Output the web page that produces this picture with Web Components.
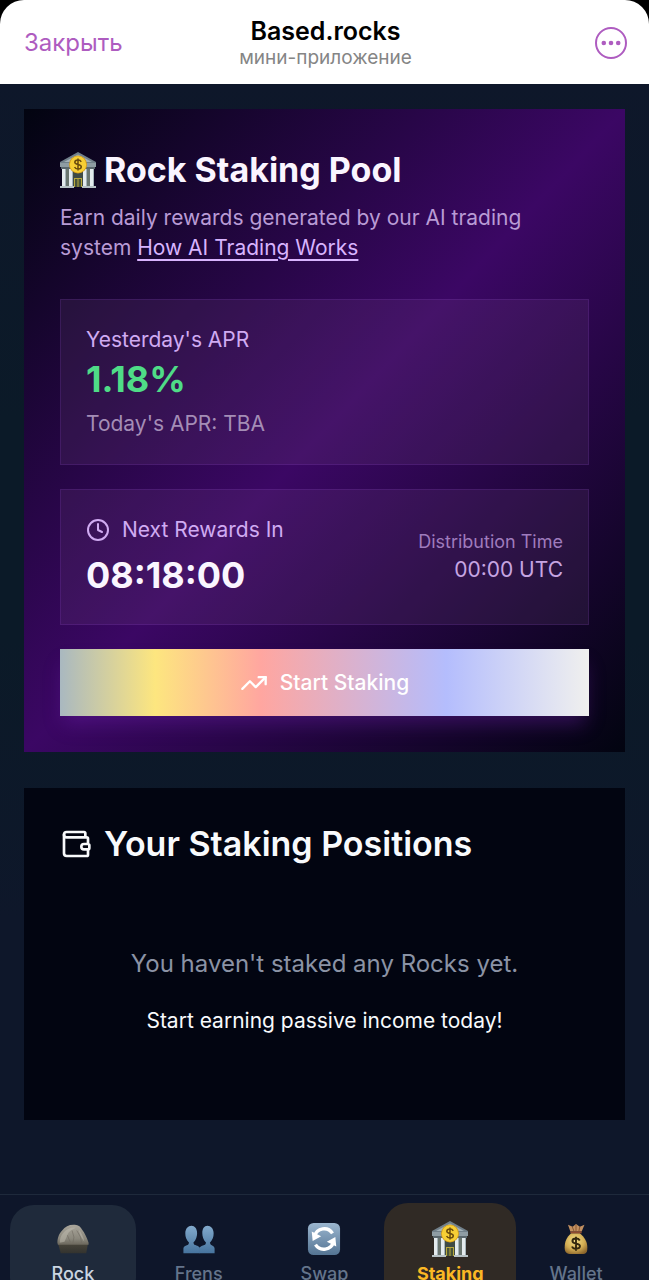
<!DOCTYPE html>
<html lang="ru">
<head>
<meta charset="UTF-8">
<meta name="viewport" content="width=device-width, initial-scale=1.0">
<title>Based.rocks</title>
<style>
    body{
        margin:0;
        background:#000;
        font-family:Inter, "Noto Sans", sans-serif;
        overflow:hidden;
    }
</style>
</head>
<body>
<rocks-app></rocks-app>
<script>
const icons = {
    more: `<svg viewBox="0 0 32 32" fill="none" stroke="currentColor" stroke-width="2">
        <circle cx="16" cy="16" r="15"/>
        <g fill="currentColor" stroke="none"><circle cx="8.8" cy="16" r="2.3"/><circle cx="16" cy="16" r="2.3"/><circle cx="23.2" cy="16" r="2.3"/></g>
    </svg>`,
    clock: `<svg viewBox="0 0 24 24" fill="none" stroke="currentColor" stroke-width="2" stroke-linecap="round" stroke-linejoin="round">
        <circle cx="12" cy="12" r="10"/><path d="M12 6v6l4 2"/>
    </svg>`,
    trend: `<svg viewBox="0 0 24 24" fill="none" stroke="currentColor" stroke-width="2" stroke-linecap="round" stroke-linejoin="round">
        <path d="M22 7 13.5 15.5 8.5 10.5 2 17"/><path d="M16 7h6v6"/>
    </svg>`,
    purse: `<svg viewBox="0 0 24 24" fill="none" stroke="currentColor" stroke-width="2" stroke-linecap="round" stroke-linejoin="round">
        <path d="M19 7V4a1 1 0 0 0-1-1H5a2 2 0 0 0 0 4h15a1 1 0 0 1 1 1v4h-3a2 2 0 0 0 0 4h3a1 1 0 0 0 1-1v-2a1 1 0 0 0-1-1"/>
        <path d="M3 5v14a2 2 0 0 0 2 2h15a1 1 0 0 0 1-1v-4"/>
    </svg>`,
    bank: `<svg viewBox="0 0 36 36">
        <path d="M3 14h30v20H3z" fill="#69756f"/>
        <path d="M12 18h12v16H12z" fill="#3f4b45"/>
        <path d="M18 0 36 10v2H0v-2z" fill="#71808a"/>
        <path d="M18 2.5 32 10H4z" fill="#a3b1b8"/>
        <path d="M0 11h36v4H0z" fill="#8e9ca3"/>
        <path d="M1 15h34v2H1z" fill="#5a676d"/>
        <g fill="#e4ebee"><path d="M2 17h4v17H2zM9 17h4v17H9zM23 17h4v17h-4zM30 17h4v17h-4z"/></g>
        <g fill="#a5b3b9"><path d="M5 17h1v17H5zM12 17h1v17h-1zM26 17h1v17h-1zM33 17h1v17h-1z"/></g>
        <path d="M14 26h8v9h-8z" fill="#b9a83c"/>
        <path d="M15 27h2.500v8H15zM18.500 27H21v8h-2.500z" fill="#485338"/>
        <path d="M0 34h14v2H0zM22 34h14v2H22z" fill="#b7c2c6"/>
        <circle cx="18" cy="12.500" r="9" fill="#d59b16"/>
        <circle cx="18" cy="12.500" r="8.200" fill="#f7cf35"/>
        <path d="M21.200 9.800c-.6-1.200-1.700-1.800-3.200-1.800-1.900 0-3.200.9-3.200 2.300 0 3.200 6.500 1.300 6.500 4.500 0 1.400-1.300 2.300-3.300 2.300-1.700 0-2.900-.7-3.400-2M18 6.500v12" fill="none" stroke="#6b4c0d" stroke-width="1.500"/>
    </svg>`,
    rock: `<svg viewBox="0 0 36 36">
        <defs>
            <linearGradient id="r" x1="0" y1="0" x2="0" y2="1"><stop offset="0" stop-color="#aaa69b"/><stop offset=".7" stop-color="#8a877c"/><stop offset="1" stop-color="#6b675c"/></linearGradient>
            <linearGradient id="w" x1="0" y1="0" x2="0" y2="1"><stop offset="0" stop-color="#4a463b"/><stop offset="1" stop-color="#33332f"/></linearGradient>
        </defs>
        <path d="M2 22h32l-2 11H5z" fill="url(#w)"/>
        <path d="M1.500 22c0-4 1-9 5-13 3-4 7-6 12-6 4 0 7 1 9 5 3 4 5 8 7 14v2H2z" fill="url(#r)"/>
        <path d="M8 11c4-4 9-6 13-5-4 2-8 4-9 8l-3 7-5 1c0-4 1-8 4-11zM24 8c3 3 5 8 6 13l-4-6z" fill="#c2beb1" opacity=".5"/>
        <path d="m17 9 2 7-1 6M22 9l4 7 1 6M12 14l3 7" fill="none" stroke="#6d695f" opacity=".6"/>
    </svg>`,
    frens: `<svg viewBox="0 0 36 36">
        <defs><linearGradient id="f" x1="0" y1="0" x2="0" y2="1"><stop offset="0" stop-color="#82aacd"/><stop offset="1" stop-color="#47749e"/></linearGradient></defs>
        <g fill="url(#f)">
            <path d="M18.500 33V28c0-2 3-3 6-4l1-2c-3-3-4-7-4-10 0-5 2-8 5.500-8s6.500 3 6.500 8c0 4-1 7-4 10l1 2c2 1 4 2 4 4v5z"/>
            <path d="M1.500 33v-5c0-2 2-3 5-4l1-2c-3-3-4-6-4-10 0-5 3-8 6.500-8s6 3 6 8c0 3-1 7-4 10l1 2c3 1 6 2 6 4v5z"/>
        </g>
    </svg>`,
    swap: `<svg viewBox="0 0 36 36">
        <defs><linearGradient id="s" x1="0" y1="0" x2="0" y2="1"><stop offset="0" stop-color="#9bb6cf"/><stop offset="1" stop-color="#547493"/></linearGradient></defs>
        <rect x="1" y="1" width="34" height="34" rx="6" fill="url(#s)"/>
        <path d="M8 15a10.500 10.500 0 0 1 19-3M28 21a10.500 10.500 0 0 1-19 3" fill="none" stroke="#fff" stroke-width="3.600"/>
        <path d="m5 10 1 10 9-5zM31 26l-1-10-9 5z" fill="#fff"/>
    </svg>`,
    bag: `<svg viewBox="0 0 36 36">
        <defs><radialGradient id="b" cx=".45" cy=".35" r=".7"><stop offset="0" stop-color="#f2dc85"/><stop offset=".6" stop-color="#d3ad53"/><stop offset="1" stop-color="#8e672c"/></radialGradient></defs>
        <path d="M12 10 9.500 3l5 2L18 2l4 3 5-2-3 7z" fill="#c29061"/>
        <path d="m14 5 2 5M18 3v7M22 5l-1 5" stroke="#86562f" fill="none"/>
        <path d="M13 12C8 16 6 21 6 27c0 5 2 7 7 7h11c5 0 6-2 6-7 0-6-3-11-8-15z" fill="url(#b)"/>
        <path d="M12 10h12v2H12z" fill="#8f4a30"/>
        <path d="M22 19.500c-.8-1.400-2.200-2-4-2-2.200 0-3.800 1-3.800 2.700 0 3.800 8 1.500 8 5.300 0 1.700-1.700 2.800-4.200 2.800-2.100 0-3.600-.8-4.200-2.400M18 15.500v15" fill="none" stroke="#33270f" stroke-width="2"/>
    </svg>`
};

class rockIcon extends HTMLElement{
    constructor(){
        super();
        this.attachShadow({mode:'open'});
    }
    connectedCallback(){
        this.shadowRoot.innerHTML = `
            <style>
                :host{
                    display:block;
                    flex:none;
                    width:28px;
                    height:28px;
                }
                svg{
                    display:block;
                    width:100%;
                    height:100%;
                }
            </style>
            ${icons[this.getAttribute('name')]}
        `
    }
}
customElements.define('rock-icon', rockIcon)

class appHeader extends HTMLElement{
    constructor(){
        super();
        this.attachShadow({mode:'open'});
    }
    connectedCallback(){
        this.shadowRoot.innerHTML = `
            <style>
                :host{
                    display:block;
                    background:#000;
                }
                header{
                    display:grid;
                    grid-template-columns:1fr auto 1fr;
                    align-items:center;
                    box-sizing:border-box;
                    min-height:84px;
                    padding:2px 22px 0 24px;
                    background:#fff;
                    border-radius:24px 24px 0 0;
                }
                button{
                    padding:0;
                    border:0;
                    background:none;
                    color:#ae5cc0;
                    font:400 24px/32px Inter, "Noto Sans", sans-serif;
                    cursor:pointer;
                }
                .close{
                    justify-self:start;
                }
                .more{
                    justify-self:end;
                }
                rock-icon{
                    width:32px;
                    height:32px;
                }
                .heading{
                    padding-top:2px;
                    text-align:center;
                }
                h1{
                    margin:0;
                    color:#000;
                    font-size:25px;
                    font-weight:600;
                    line-height:28px;
                }
                p{
                    margin:0;
                    color:#858585;
                    font-size:19px;
                    line-height:26px;
                }
            </style>
            <header>
                <button class="close" type="button">Закрыть</button>
                <div class="heading">
                    <h1>Based.rocks</h1>
                    <p>мини-приложение</p>
                </div>
                <button class="more" type="button" aria-label="Ещё"><rock-icon name="more"></rock-icon></button>
            </header>
        `
    }
}
customElements.define('app-header', appHeader)

// translucent box inside the pool card
class statPanel extends HTMLElement{
    constructor(){
        super();
        this.attachShadow({mode:'open'});
    }
    connectedCallback(){
        this.shadowRoot.innerHTML = `
            <style>
                :host{
                    display:flex;
                    align-items:center;
                    justify-content:space-between;
                    padding:25px;
                    border:1px solid rgba(168, 85, 247, 0.14);
                    background:rgba(120, 85, 130, 0.17);
                }
            </style>
            <slot></slot>
            <slot name="side"></slot>
        `
    }
}
customElements.define('stat-panel', statPanel)

class stakingPool extends HTMLElement{
    constructor(){
        super();
        this.attachShadow({mode:'open'});
    }
    connectedCallback(){
        this.shadowRoot.innerHTML = `
            <style>
                :host{
                    display:flex;
                    flex-direction:column;
                    gap:24px;
                    padding:36px;
                    background:linear-gradient(to bottom right, #020410, #3b0764 50%, #020410);
                    color:#d0abf2;
                    font-size:21px;
                    line-height:30px;
                }
                h2{
                    display:flex;
                    align-items:center;
                    gap:8px;
                    margin:0 0 8px;
                    color:#faf5ff;
                    font-size:34px;
                    font-weight:700;
                    line-height:50px;
                }
                h2 rock-icon{
                    width:36px;
                    height:36px;
                }
                p{
                    margin:0;
                }
                .intro{
                    margin-bottom:12px;
                }
                .intro p{
                    color:#b99bd5;
                }
                a{
                    color:#d8b4fe;
                    text-underline-offset:4px;
                }
                .value{
                    color:#faf5ff;
                    font-size:36px;
                    font-weight:700;
                    line-height:48px;
                }
                .apr{
                    margin-bottom:6px;
                    color:#4fdc87;
                }
                .today{
                    color:#a48db6;
                }
                .label{
                    display:flex;
                    align-items:center;
                    gap:12px;
                    margin-bottom:6px;
                }
                .label rock-icon{
                    width:24px;
                    height:24px;
                }
                .side{
                    color:#c6a5e2;
                    text-align:right;
                }
                .small{
                    color:#9f7bbd;
                    font-size:18px;
                    line-height:26px;
                }
                button{
                    display:flex;
                    align-items:center;
                    justify-content:center;
                    gap:12px;
                    min-height:67px;
                    padding:0 24px;
                    border:0;
                    background:linear-gradient(90deg, #a9b8c0, #fde67f 18%, #ffa6a0 38%, #b4bdfd 73%, #f0f0ee);
                    box-shadow:0 12px 18px -4px rgba(107, 33, 168, 0.4);
                    color:#fff;
                    font:500 21px/30px Inter, "Noto Sans", sans-serif;
                    cursor:pointer;
                }
            </style>
            <div class="intro">
                <h2><rock-icon name="bank"></rock-icon>Rock Staking Pool</h2>
                <p>Earn daily rewards generated by our AI trading system <a href="#trading">How AI Trading Works</a></p>
            </div>
            <stat-panel>
                <div>
                    <p>Yesterday's APR</p>
                    <p class="value apr">1.18%</p>
                    <p class="today">Today's APR: TBA</p>
                </div>
            </stat-panel>
            <stat-panel>
                <div>
                    <p class="label"><rock-icon name="clock"></rock-icon>Next Rewards In</p>
                    <p class="value">08:18:00</p>
                </div>
                <div class="side" slot="side">
                    <p class="small">Distribution Time</p>
                    <p>00:00 UTC</p>
                </div>
            </stat-panel>
            <button type="button"><rock-icon name="trend"></rock-icon>Start Staking</button>
        `
    }
}
customElements.define('staking-pool', stakingPool)

class stakingPositions extends HTMLElement{
    constructor(){
        super();
        this.attachShadow({mode:'open'});
    }
    connectedCallback(){
        this.shadowRoot.innerHTML = `
            <style>
                :host{
                    display:block;
                    padding:36px;
                    background:#020511;
                }
                h2{
                    display:flex;
                    align-items:center;
                    gap:12px;
                    margin:0 0 34px;
                    color:#f8fafc;
                    font-size:34px;
                    font-weight:600;
                    line-height:40px;
                }
                h2 rock-icon{
                    width:32px;
                    height:32px;
                }
                .empty{
                    padding:48px 0;
                    text-align:center;
                }
                p{
                    margin:0;
                    color:#f8fafc;
                    font-size:21px;
                    line-height:30px;
                }
                .empty p:first-child{
                    margin-bottom:24px;
                    color:#8b93a5;
                    font-size:24px;
                    line-height:36px;
                }
            </style>
            <h2><rock-icon name="purse"></rock-icon>Your Staking Positions</h2>
            <div class="empty">
                <p>You haven't staked any Rocks yet.</p>
                <p>Start earning passive income today!</p>
            </div>
        `
    }
}
customElements.define('staking-positions', stakingPositions)

class navTab extends HTMLElement{
    constructor(){
        super();
        this.attachShadow({mode:'open'});
    }
    connectedCallback(){
        this.shadowRoot.innerHTML = `
            <style>
                :host{
                    display:block;
                }
                a{
                    display:flex;
                    flex-direction:column;
                    align-items:center;
                    gap:5px;
                    padding:16px 0;
                    border-radius:24px;
                    color:#64748b;
                    font-size:18px;
                    font-weight:500;
                    line-height:24px;
                    text-decoration:none;
                }
                rock-icon{
                    width:34px;
                    height:36px;
                }
                :host([hovered]) a{
                    background:#1f2a3b;
                    color:#cbd5e1;
                }
                /* the current tab is a little bigger than its column */
                :host([current]){
                    margin:-2px -3px;
                }
                :host([current]) a{
                    padding:18px 0;
                    background:#302a25;
                    color:#fbb824;
                    font-weight:700;
                }
                :host([current]) rock-icon{
                    width:38px;
                }
            </style>
            <a href="#${this.getAttribute('icon')}">
                <rock-icon name="${this.getAttribute('icon')}"></rock-icon>
                <slot></slot>
            </a>
        `
    }
}
customElements.define('nav-tab', navTab)

class rocksApp extends HTMLElement{
    constructor(){
        super();
        this.attachShadow({mode:'open'});
    }
    connectedCallback(){
        this.shadowRoot.innerHTML = `
            <style>
                :host{
                    display:block;
                    background:#0e172a;
                }
                main{
                    display:flex;
                    flex-direction:column;
                    gap:36px;
                    padding:25px 24px 74px;
                    background:linear-gradient(#0e172a, #0b1a28 30%, #0b1a28 50%, #0e172a 75%);
                }
                nav{
                    display:grid;
                    grid-template-columns:repeat(5, 1fr);
                    padding:10px;
                    border-top:1px solid #1e293b;
                    background:#0e162a;
                }
            </style>
            <app-header></app-header>
            <main>
                <staking-pool></staking-pool>
                <staking-positions></staking-positions>
            </main>
            <nav>
                <nav-tab icon="rock" hovered>Rock</nav-tab>
                <nav-tab icon="frens">Frens</nav-tab>
                <nav-tab icon="swap">Swap</nav-tab>
                <nav-tab icon="bank" current>Staking</nav-tab>
                <nav-tab icon="bag">Wallet</nav-tab>
            </nav>
        `
    }
}
customElements.define('rocks-app', rocksApp)
</script>
</body>
</html>
